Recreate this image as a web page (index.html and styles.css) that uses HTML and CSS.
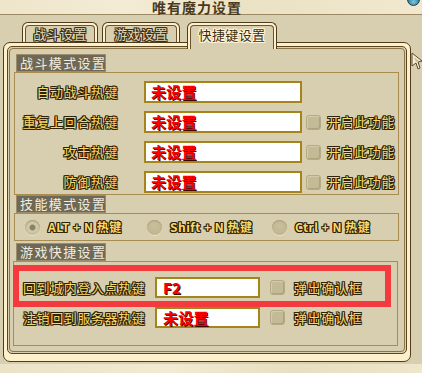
FILE: index.html
```html
<!doctype html>
<html>

<head>
    <title>唯有魔力设置</title>
    <link rel="stylesheet" href="styles.css">
</head>

<body>
    <div class="titlebar">
        <span class="title">唯有魔力设置</span>
        <i class="orb"></i>
    </div>

    <div class="tabs">
        <div class="tab"><span>战斗设置</span></div>
        <div class="tab tab-mid"><span>游戏设置</span></div>
        <div class="tab active"><span>快捷键设置</span></div>
    </div>

    <div class="frame">
        <div class="frame-in">
            <div class="frame-body">

                <div class="sec-head">战斗模式设置</div>
                <div class="sec-box combat">
                    <div class="row">
                        <span class="lbl">自动战斗热键</span>
                        <div class="key"><b>未设置</b></div>
                    </div>
                    <div class="row">
                        <span class="lbl">重复上回合热键</span>
                        <div class="key"><b>未设置</b></div>
                        <i class="check"></i>
                        <span class="opt">开启此功能</span>
                    </div>
                    <div class="row">
                        <span class="lbl">攻击热键</span>
                        <div class="key"><b>未设置</b></div>
                        <i class="check"></i>
                        <span class="opt">开启此功能</span>
                    </div>
                    <div class="row">
                        <span class="lbl">防御热键</span>
                        <div class="key"><b>未设置</b></div>
                        <i class="check"></i>
                        <span class="opt">开启此功能</span>
                    </div>
                </div>

                <div class="sec-head">技能模式设置</div>
                <div class="sec-box skills">
                    <div class="radio-item"><i class="radio on"></i><span class="opt">ALT + N 热键</span></div>
                    <div class="radio-item wide"><i class="radio"></i><span class="opt">Shift + N 热键</span></div>
                    <div class="radio-item"><i class="radio"></i><span class="opt">Ctrl + N 热键</span></div>
                </div>

                <div class="sec-head gap">游戏快捷设置</div>
                <div class="sec-box quick">
                    <div class="highlight"></div>
                    <div class="qrow">
                        <span class="lbl">回到城内登入点热键</span>
                        <div class="key small"><b>F2</b></div>
                        <i class="check"></i>
                        <span class="opt">弹出确认框</span>
                    </div>
                    <div class="qrow">
                        <span class="lbl">注销回到服务器热键</span>
                        <div class="key small"><b>未设置</b></div>
                        <i class="check"></i>
                        <span class="opt">弹出确认框</span>
                    </div>
                </div>

            </div>
        </div>
    </div>

    <div class="bottom"></div>

    <svg class="cursor" width="12" height="18" viewBox="0 0 12 18">
        <path d="M1 1 L11 9 L7 10 L9 16 L7 17 L5 11 L1 14 Z" fill="#f6edd2" stroke="#5a4a2c" stroke-width="1"/>
        <path d="M3 5 L8 9 L5 10 Z" fill="#c9bb92"/>
    </svg>
</body>

</html>
```

FILE: styles.css
```css
* {
    margin: 0;
    padding: 0;
    box-sizing: border-box;
}

body {
    width: 422px;
    height: 373px;
    overflow: hidden;
    position: relative;
    background-color: #d8cfb0;
    font-family: "Noto Sans CJK SC", "DejaVu Sans", sans-serif;
}

.titlebar {
    height: 15px;
    background: linear-gradient(90deg, #eee5ca, #f3ebd4 30%, #ebe1c4 60%, #f1e8cf);
    border-bottom: 1px solid #9c8862;
    padding-left: 152px;
    position: relative;
}

.title {
    display: block;
    font-size: 14px;
    line-height: 14px;
    font-weight: bold;
    letter-spacing: 1px;
    color: #4a3a1c;
}

.orb {
    position: absolute;
    right: 2px;
    top: -7px;
    width: 13px;
    height: 13px;
    border-radius: 50%;
    background: radial-gradient(circle at 50% 70%, #7cc6dc, #2f7f9e 60%, #1f4c5e);
    border: 1px solid #1c3c48;
}

.tabs {
    display: flex;
    align-items: flex-start;
    height: 20px;
    margin-top: 7px;
    padding-left: 22px;
    position: relative;
    z-index: 2;
}

.tab {
    width: 76px;
    height: 20px;
    border: 1px solid #4e3c1c;
    border-bottom: none;
    border-radius: 6px 6px 0 0;
    padding: 2px 2px 0;
    background-color: #fff0cc;
    margin-right: 4px;
}

.tab span {
    display: block;
    height: 100%;
    border: 1px solid #6a5430;
    border-bottom: none;
    border-radius: 4px 4px 0 0;
    background-color: #d8cfb0;
    text-align: center;
    font-size: 13px;
    line-height: 15px;
    letter-spacing: 0.4px;
    color: #e2d9bb;
    text-shadow: 1px 0 0 #3e2f12, -1px 0 0 #3e2f12, 0 1px 0 #3e2f12, 0 -1px 0 #3e2f12,
        1px 1px 0 #3e2f12, -1px -1px 0 #3e2f12, 1px -1px 0 #3e2f12, -1px 1px 0 #3e2f12;
}

.tab-mid {
    width: 78px;
    margin-right: 7px;
}

.tab.active {
    width: 90px;
    height: 27px;
    margin-bottom: -7px;
}

.tab.active span {
    color: #3a2c10;
    line-height: 17px;
    text-shadow: 1px 0 0 #fff6dc, -1px 0 0 #fff6dc, 0 1px 0 #fff6dc, 0 -1px 0 #fff6dc,
        1px 1px 0 #fff6dc, -1px -1px 0 #fff6dc, 1px -1px 0 #fff6dc, -1px 1px 0 #fff6dc;
}

.frame {
    width: 408px;
    height: 320px;
    margin-left: 3px;
    border: 1px solid #4e3c1c;
    border-radius: 7px;
    padding: 3px 3px 7px;
    background-color: #fff0cc;
}

.frame-in {
    height: 100%;
    border: 1px solid #5c4620;
    border-radius: 5px;
    padding: 1px;
    background-color: #d8cfb0;
}

.frame-body {
    height: 100%;
    border: 1px solid #8c7548;
    border-radius: 4px;
    padding-top: 5px;
}

.sec-head {
    width: 90px;
    height: 18px;
    margin-left: 6px;
    padding-left: 3px;
    background-color: #6e6857;
    border: 1px solid #9c8c6a;
    font-size: 13px;
    line-height: 16px;
    letter-spacing: 1.4px;
    color: #f2eedf;
    white-space: nowrap;
}

.sec-head.gap {
    margin-top: 2px;
}

.sec-box {
    width: 385px;
    margin-left: 4px;
    border: 1px solid #a98c4f;
}

.combat {
    padding: 8px 0 1px;
    display: flex;
    flex-direction: column;
    gap: 8px;
}

.row {
    display: flex;
    align-items: center;
    height: 22px;
}

.lbl,
.opt {
    font-size: 13px;
    line-height: 16px;
    letter-spacing: 0.6px;
    color: #f9d96c;
    white-space: nowrap;
    text-shadow: 1px 0 0 #2e2208, -1px 0 0 #2e2208, 0 1px 0 #2e2208, 0 -1px 0 #2e2208,
        1px 1px 0 #2e2208, -1px -1px 0 #2e2208, 1px -1px 0 #2e2208, -1px 1px 0 #2e2208;
}

.row .lbl {
    width: 103px;
    text-align: right;
}

.key {
    width: 158px;
    height: 22px;
    margin-left: 26px;
    border: 2px solid #a6841c;
    background-color: #fff;
    padding-left: 5px;
    font-size: 15px;
    line-height: 18px;
    color: #ff0000;
    text-shadow: 1px 1px 0 #3c0000;
}

.key b {
    letter-spacing: 0.2px;
}

.check {
    display: block;
    width: 15px;
    height: 15px;
    margin-left: 4px;
    border-radius: 3px;
    background-color: #c3ba96;
    border: 1px solid #b4aa84;
    box-shadow: inset 1px 1px 0 #d4cba9, inset -1px -1px 0 #aea37e;
}

.row .opt {
    margin-left: 6px;
}

.skills {
    height: 28px;
    display: flex;
    align-items: center;
    padding-left: 10px;
}

.radio-item {
    width: 122px;
    display: flex;
    align-items: center;
}

.radio-item.wide {
    width: 125px;
}

.radio {
    display: block;
    width: 15px;
    height: 15px;
    border-radius: 50%;
    background: radial-gradient(circle at 50% 40%, #c9c09c, #bcb28c);
    box-shadow: 0 1px 0 #ece3c6, inset 0 1px 1px #a89e7a;
}

.radio.on {
    background: radial-gradient(circle, #8a8266 0, #8a8266 2.5px, #d4ccac 3.5px, #c6bd98 7px);
}

.radio-item .opt {
    margin-left: 8px;
    font-weight: bold;
    font-size: 12px;
    letter-spacing: 0.5px;
}

.quick {
    width: 385px;
    height: 85px;
    margin-left: 3px;
    padding: 15px 0 0 9px;
    display: flex;
    flex-direction: column;
    gap: 9px;
    position: relative;
}

.highlight {
    position: absolute;
    left: -1px;
    top: 3px;
    width: 378px;
    height: 42px;
    border: 6px solid #f43a3e;
}

.qrow {
    display: flex;
    align-items: center;
    height: 21px;
    position: relative;
}

.qrow .lbl {
    width: 132px;
}

.key.small {
    width: 105px;
    height: 21px;
    margin-left: 0;
    padding-left: 6px;
    line-height: 17px;
}

.qrow .check {
    margin-left: 10px;
}

.qrow .opt {
    margin-left: 9px;
}

.bottom {
    height: 12px;
    margin-top: 2px;
    background: linear-gradient(90deg, #ebe2c6, #f2ead2 40%, #e8dec0 70%, #efe6cb);
}

.cursor {
    position: absolute;
    left: 411px;
    top: 52px;
}
```
